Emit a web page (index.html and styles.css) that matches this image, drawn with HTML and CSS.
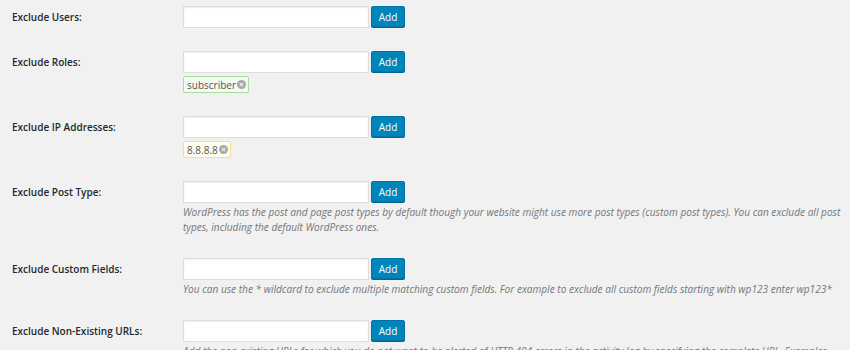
FILE: index.html
```html
<!DOCTYPE html>
<html lang="en">

<head>
  <meta charset="UTF-8">
  <title>Exclude settings</title>
  <link rel="stylesheet" href="styles.css">
</head>

<body>
  <div class="form-table">
    <!-- users -->
    <div class="row">
      <div class="label">Exclude Users:</div>
      <div class="field">
        <div class="line">
          <input type="text" class="regular-text">
          <button class="button">Add</button>
        </div>
      </div>
    </div>
    <!-- roles -->
    <div class="row">
      <div class="label">Exclude Roles:</div>
      <div class="field">
        <div class="line">
          <input type="text" class="regular-text">
          <button class="button">Add</button>
        </div>
        <div class="tags">
          <span class="tag green">subscriber<i class="del"></i></span>
        </div>
      </div>
    </div>
    <!-- ip -->
    <div class="row">
      <div class="label">Exclude IP Addresses:</div>
      <div class="field">
        <div class="line">
          <input type="text" class="regular-text">
          <button class="button">Add</button>
        </div>
        <div class="tags">
          <span class="tag yellow">8.8.8.8<i class="del"></i></span>
        </div>
      </div>
    </div>
    <!-- post type -->
    <div class="row">
      <div class="label">Exclude Post Type:</div>
      <div class="field">
        <div class="line">
          <input type="text" class="regular-text">
          <button class="button">Add</button>
        </div>
        <p class="description">WordPress has the post and page post types by default though your website might use more post types (custom post types). You can exclude all post types, including the default WordPress ones.</p>
      </div>
    </div>
    <!-- custom fields -->
    <div class="row">
      <div class="label">Exclude Custom Fields:</div>
      <div class="field">
        <div class="line">
          <input type="text" class="regular-text">
          <button class="button">Add</button>
        </div>
        <p class="description">You can use the * wildcard to exclude multiple matching custom fields. For example to exclude all custom fields starting with wp123 enter wp123*</p>
      </div>
    </div>
    <!-- urls -->
    <div class="row">
      <div class="label">Exclude Non-Existing URLs:</div>
      <div class="field">
        <div class="line">
          <input type="text" class="regular-text">
          <button class="button">Add</button>
        </div>
        <p class="description">Add the non existing URLs for which you do not want to be alerted of HTTP 404 errors in the activity log by specifying the complete URL. Examples below:</p>
      </div>
    </div>
  </div>
</body>

</html>
```

FILE: styles.css
```css
* {
  padding: 0;
  margin: 0;
  box-sizing: border-box;
}

body {
  background-color: #f1f1f1;
  font-family: "Open Sans", "Liberation Sans", sans-serif;
  font-size: 10px;
  color: #23282d;
  overflow: hidden;
}

.form-table {
  padding: 6px 8px 0 12px;
}

.row {
  display: flex;
  padding-bottom: 23px;
}

.label {
  width: 171px;
  flex-shrink: 0;
  height: 22px;
  line-height: 22px;
  font-weight: 600;
}

.field {
  flex: 1;
}

.line {
  display: flex;
  align-items: flex-start;
  gap: 2px;
}

.regular-text {
  width: 186px;
  height: 22px;
  border: 1px solid #dddddd;
  background-color: #ffffff;
  box-shadow: inset 0 1px 2px rgba(0, 0, 0, 0.07);
  outline: none;
}

.button {
  width: 34px;
  height: 21px;
  background-color: #0085ba;
  border: 1px solid #0073aa;
  border-radius: 2px;
  box-shadow: 0 1px 0 #006799;
  color: #ffffff;
  font-family: inherit;
  font-size: 10px;
  line-height: 18px;
}

.tags {
  margin-top: 3px;
  height: 17px;
}

.tag {
  display: inline-flex;
  align-items: center;
  height: 17px;
  padding: 0 2px 0 3px;
  border: 1px solid;
  border-radius: 2px;
  color: #555555;
  font-size: 10px;
}

.tag.green {
  border-color: #a7dd9f;
  background-color: #f4faf2;
}

.tag.yellow {
  border-color: #f0e28e;
  background-color: #fffdec;
}

.del {
  position: relative;
  width: 9px;
  height: 9px;
  margin-left: 1px;
  border-radius: 50%;
  background-color: #a7a7a7;
}

.del::before,
.del::after {
  content: "";
  position: absolute;
  left: 2px;
  top: 4px;
  width: 5px;
  height: 1px;
  background-color: #ffffff;
  transform: rotate(45deg);
}

.del::after {
  transform: rotate(-45deg);
}

.description {
  margin-top: 2px;
  line-height: 15px;
  font-size: 10.1px;
  font-style: italic;
  color: #72777c;
}
```
